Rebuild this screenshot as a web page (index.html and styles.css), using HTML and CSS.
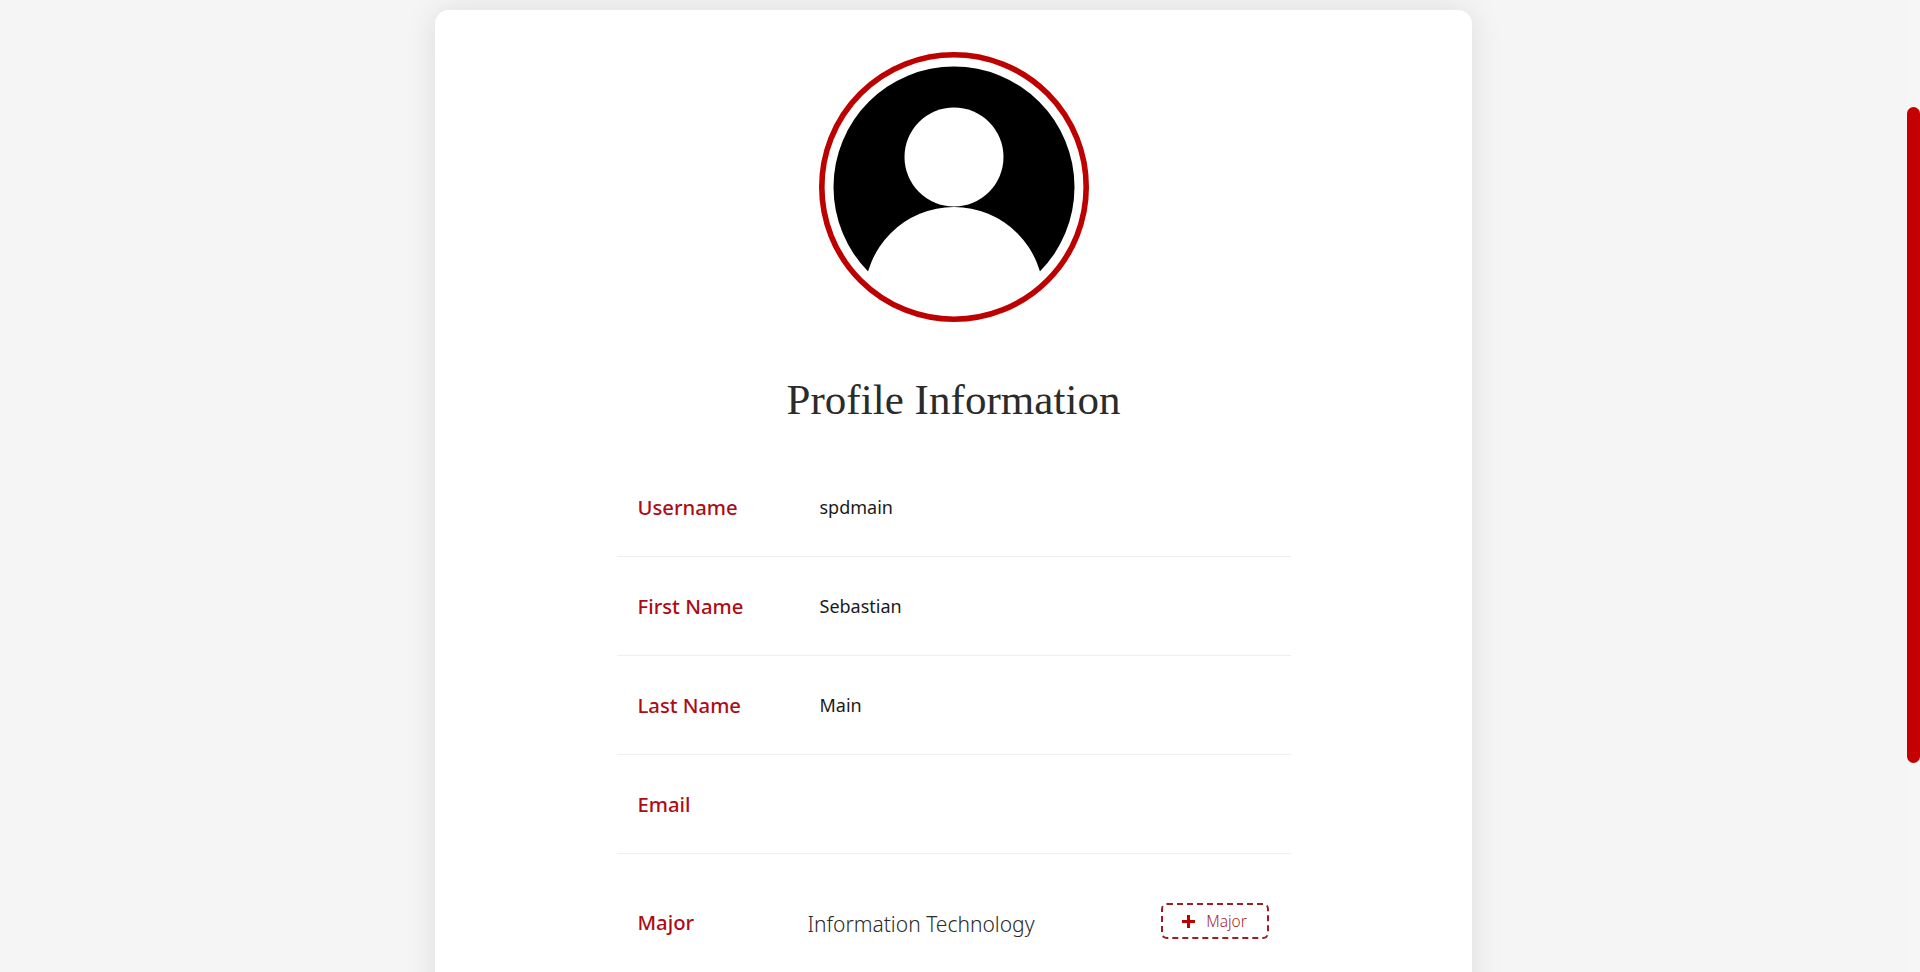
FILE: index.html
```html
<!DOCTYPE html>
<html lang="en">
<head>
    <meta charset="UTF-8">
    <meta name="viewport" content="width=device-width, initial-scale=1.0">
    <title>Profile Information</title>
    <link rel="stylesheet" href="styles.css">
</head>
<body>
    <main class="page">
        <div class="profile-card">
            <svg class="avatar" viewBox="0 0 270 270" role="img" aria-label="Profile picture">
                <circle cx="135" cy="135" r="120.5" fill="#000"></circle>
                <circle cx="135" cy="105" r="49.5" fill="#fff"></circle>
                <circle cx="135" cy="244.5" r="89.5" fill="#fff"></circle>
                <rect x="40" y="220.5" width="190" height="40" fill="#fff"></rect>
                <circle cx="135" cy="135" r="132.2" fill="none" stroke="#bd0000" stroke-width="5.6"></circle>
            </svg>
            <h1 class="profile-title">Profile Information</h1>

            <div class="info-list">
                <div class="info-row">
                    <span class="info-label">Username</span>
                    <span class="info-value">spdmain</span>
                </div>
                <div class="info-row">
                    <span class="info-label">First Name</span>
                    <span class="info-value">Sebastian</span>
                </div>
                <div class="info-row">
                    <span class="info-label">Last Name</span>
                    <span class="info-value">Main</span>
                </div>
                <div class="info-row">
                    <span class="info-label">Email</span>
                    <span class="info-value"></span>
                </div>
                <div class="major-row">
                    <span class="info-label">Major</span>
                    <span class="major-value">Information Technology</span>
                    <button class="add-btn" type="button">
                        <svg class="add-icon" viewBox="0 0 13 13" aria-hidden="true">
                            <path d="M6.5 0v13M0 6.5h13" stroke="#bd0000" stroke-width="3" fill="none"></path>
                        </svg>
                        Major
                    </button>
                </div>
            </div>
        </div>
    </main>
    <div class="scroll-track">
        <div class="scroll-thumb"></div>
    </div>
</body>
</html>
```

FILE: styles.css
```css
html, body {
    height: 100%;
}
body {
    margin: 0;
    display: flex;
    height: 100vh;
    overflow: hidden;
    background-color: #f5f5f5;
    color: #222;
    font-family: 'Noto Sans', 'Open Sans', sans-serif;
}
.page {
    flex: 1;
    display: flex;
    justify-content: center;
    align-items: flex-start;
    overflow: hidden;
    padding-top: 10px;
}
.profile-card {
    width: 1037px;
    height: 1400px;
    flex-shrink: 0;
    box-sizing: border-box;
    padding-top: 42px;
    background-color: #fff;
    border-radius: 14px;
    box-shadow: 0 0 32px rgba(0, 0, 0, 0.1);
    display: flex;
    flex-direction: column;
    align-items: center;
}
.avatar {
    display: block;
    width: 270px;
    height: 270px;
}
.profile-title {
    margin: 51px 0 0;
    font-family: 'Liberation Serif', serif;
    font-size: 43px;
    font-weight: 400;
    line-height: 54px;
    letter-spacing: 0.05px;
    color: #2b2b2b;
}
.info-list {
    width: 674px;
    margin-top: 31px;
}
.info-row {
    display: flex;
    align-items: center;
    height: 99px;
    padding-left: 21px;
    box-sizing: border-box;
    border-bottom: 1px solid #eeeeee;
}
.info-label {
    width: 182px;
    flex-shrink: 0;
    font-size: 20.3px;
    font-weight: 500;
    color: #ad0c14;
}
.info-value {
    font-size: 18px;
    color: #1a1a1a;
}
.major-row {
    display: flex;
    align-items: center;
    height: 135px;
    padding: 0 22px 0 21px;
}
.major-value {
    flex: 1;
    margin-top: 4px;
    margin-left: -12px;
    font-size: 21px;
    font-weight: 300;
    color: #2b2b2b;
}
.add-btn {
    display: flex;
    align-items: center;
    justify-content: center;
    gap: 11px;
    width: 108px;
    height: 36px;
    margin-top: -1px;
    padding: 0;
    border: 2px dashed #a01c24;
    border-radius: 6px;
    background: none;
    font-family: inherit;
    font-size: 15.5px;
    font-weight: 300;
    color: #a8282e;
}
.add-icon {
    width: 13px;
    height: 13px;
}
.scroll-track {
    width: 13px;
    flex-shrink: 0;
    background-color: #f6f6f6;
}
.scroll-thumb {
    height: 656px;
    margin-top: 107px;
    background-color: #c40000;
    border-radius: 7px;
}
```
